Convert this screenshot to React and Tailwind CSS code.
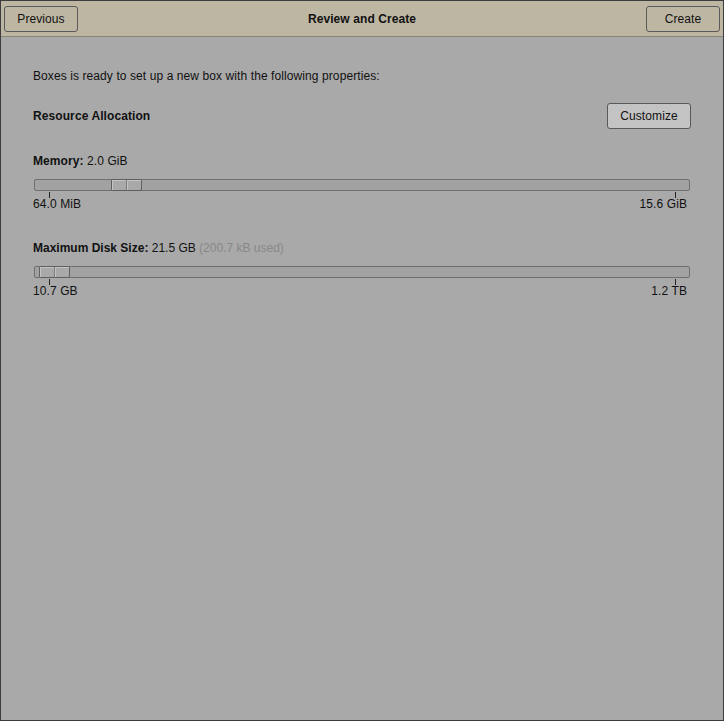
import React from 'react';

const font = { fontFamily: '"Liberation Sans", Arial, sans-serif' };

const Slider = ({ pos, minLabel, maxLabel }) => (
  <div className="mt-[11px]">
    <div className="relative ml-[1px] mr-[1px] h-[12px] rounded-[2px] border border-[#6f6f6f] bg-[#a2a2a2]">
      {/* thumb */}
      <div
        className="absolute top-[-1px] flex h-[12px] w-[31px] rounded-[2px] border border-[#5f5f5f] bg-[#a9a9a9]"
        style={{ left: pos }}
      >
        <div className="flex-1 border-r border-[#7c7c7c] shadow-[inset_1px_1px_0_#c4c4c4]" />
        <div className="flex-1 shadow-[inset_1px_1px_0_#c4c4c4]" />
      </div>
    </div>
    <div className="relative h-[6px]">
      <div className="absolute left-[16px] top-[1px] h-[6px] w-[1px] bg-[#222]" />
      <div className="absolute right-[15px] top-[1px] h-[6px] w-[1px] bg-[#222]" />
    </div>
    <div className="flex justify-between pr-[4px] text-[12px] leading-[14px] tracking-[0.09px] text-[#111]">
      <span>{minLabel}</span>
      <span>{maxLabel}</span>
    </div>
  </div>
);

const Button = ({ children, className }) => (
  <button
    className={`h-[26px] rounded-[3px] border border-[#5a5a5a] text-[12px] tracking-[0.09px] text-[#111] ${className}`}
  >
    {children}
  </button>
);

export default function App() {
  return (
    <div style={font} className="flex h-[721px] w-[724px] flex-col border border-[#3d3d3d] bg-[#a9a9a9]">
      <div className="flex h-[36px] items-center justify-between border-b border-[#8a8678] bg-[#bdb6a3] px-[3px]">
        <Button className="w-[74px] bg-[#bdb6a3]">Previous</Button>
        <div className="text-[12px] font-bold tracking-[0.09px] text-[#111]">Review and Create</div>
        <Button className="w-[74px] bg-[#bdb6a3]">Create</Button>
      </div>

      <div className="px-[32px] pt-[32px] tracking-[0.09px]">
        <p className="text-[12px] leading-[14px] text-[#111]">
          Boxes is ready to set up a new box with the following properties:
        </p>

        <div className="mt-[20px] flex items-center justify-between">
          <span className="text-[12px] font-bold text-[#111]">Resource Allocation</span>
          <Button className="w-[84px] bg-[#c3c3c3]">Customize</Button>
        </div>

        <div className="mt-[25px]">
          <div className="text-[12px] leading-[14px] text-[#111]">
            <span className="font-bold">Memory:</span> 2.0 GiB
          </div>
          <Slider pos={76} minLabel="64.0 MiB" maxLabel="15.6 GiB" />
        </div>

        <div className="mt-[30px]">
          <div className="text-[12px] leading-[14px] tracking-normal text-[#111]">
            <span className="font-bold">Maximum Disk Size:</span> 21.5 GB{' '}
            <span className="text-[#888]">(200.7 kB used)</span>
          </div>
          <Slider pos={4} minLabel="10.7 GB" maxLabel="1.2 TB" />
        </div>
      </div>
    </div>
  );
}
